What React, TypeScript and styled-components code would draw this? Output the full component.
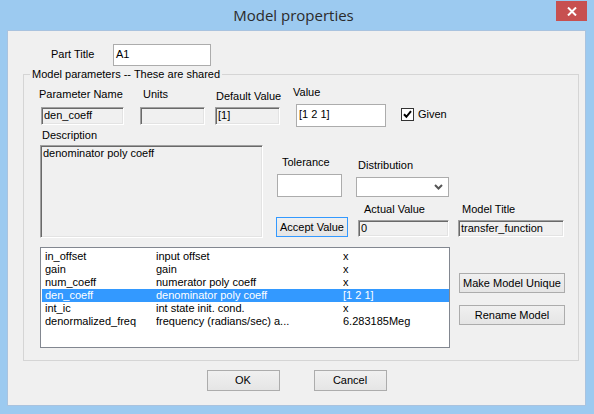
import React from 'react';
import styled, { createGlobalStyle } from 'styled-components';

const GlobalStyle = createGlobalStyle`
  html, body {
    margin: 0;
    padding: 0;
    background: #9ccaf0;
  }
  * {
    box-sizing: border-box;
  }
`;

const Window = styled.div`
  width: 594px;
  height: 414px;
  background: #9ccaf0;
  display: flex;
  flex-direction: column;
  font-family: 'Liberation Sans', Arial, sans-serif;
  font-size: 11px;
  color: #000;
  overflow: hidden;
`;

const TitleBar = styled.div`
  height: 30px;
  display: grid;
  grid-template-columns: 1fr auto 1fr;
  padding-right: 7px;
`;

const Title = styled.div`
  grid-column: 2;
  font-family: 'Open Sans', 'Noto Sans', sans-serif;
  font-size: 15px;
  line-height: 30px;
  color: #2b2b2b;
  padding-top: 0;
`;

const CloseButton = styled.div`
  grid-column: 3;
  justify-self: end;
  margin-top: 1px;
  width: 31px;
  height: 20px;
  background: #c75050;
  display: flex;
  align-items: center;
  justify-content: center;
`;

const Client = styled.div`
  flex: 1;
  margin: 0 8px 8px 7px;
  background: #f0f0f0;
  border: 1px solid #a9c3df;
  display: flex;
  flex-direction: column;
`;

const PartRow = styled.div`
  display: flex;
  align-items: center;
  margin-top: 13px;
  padding-left: 43px;
`;

const PartLabel = styled.span`
  width: 62px;
  line-height: 13px;
  margin-top: -2px;
`;

const TextInput = styled.div<{ $w: number; $h: number }>`
  width: ${(p) => p.$w}px;
  height: ${(p) => p.$h}px;
  background: #fff;
  border: 1px solid #acacac;
  padding: 2px 2px 0;
  line-height: 15px;
  white-space: nowrap;
`;

const SunkenBox = styled.div<{ $w: number; $h: number }>`
  width: ${(p) => p.$w}px;
  height: ${(p) => p.$h}px;
  background: #f0f0f0;
  border-style: solid;
  border-width: 1px;
  border-color: #a0a0a0 #ffffff #ffffff #a0a0a0;
  box-shadow: inset 1px 1px 0 #696969, inset -1px -1px 0 #e3e3e3;
  padding: 1px 2px 0 2px;
  line-height: 13px;
  white-space: nowrap;
  overflow: hidden;
`;

const GroupBox = styled.fieldset`
  margin: 2px 0 0 15px;
  width: 556px;
  min-width: 0;
  padding: 0 0 12px 0;
  border: 1px solid #d5d5d5;
  display: flex;
  flex-direction: column;
`;

const Legend = styled.legend`
  margin-left: 6px;
  padding: 0 2px;
  height: 13px;
  line-height: 13px;
  font-size: 11px;
`;

const Row = styled.div<{ $pl: number; $mt?: number }>`
  display: flex;
  align-items: flex-start;
  padding-left: ${(p) => p.$pl}px;
  margin-top: ${(p) => p.$mt ?? 0}px;
`;

const Column = styled.div<{ $ml?: number; $mt?: number }>`
  display: flex;
  flex-direction: column;
  align-items: flex-start;
  margin-left: ${(p) => p.$ml ?? 0}px;
  margin-top: ${(p) => p.$mt ?? 0}px;
`;

const Field = styled.div<{ $w: number; $ml?: number; $mt?: number }>`
  width: ${(p) => p.$w}px;
  display: flex;
  flex-direction: column;
  margin-left: ${(p) => p.$ml ?? 0}px;
  margin-top: ${(p) => p.$mt ?? 0}px;
`;

const FieldLabel = styled.span<{ $dx?: number; $gap: number }>`
  display: block;
  height: 13px;
  line-height: 13px;
  margin-left: ${(p) => p.$dx ?? 0}px;
  margin-bottom: ${(p) => p.$gap}px;
  white-space: nowrap;
`;

const CheckWrap = styled.label<{ $ml: number; $mt: number }>`
  display: flex;
  align-items: center;
  gap: 4px;
  margin-left: ${(p) => p.$ml}px;
  margin-top: ${(p) => p.$mt}px;
  line-height: 13px;
`;

const CheckBox = styled.span`
  width: 13px;
  height: 13px;
  background: #fff;
  border: 1px solid #333;
  display: flex;
  align-items: center;
  justify-content: center;
`;

const Select = styled.div<{ $w: number; $h: number }>`
  width: ${(p) => p.$w}px;
  height: ${(p) => p.$h}px;
  background: #fff;
  border: 1px solid #acacac;
  display: flex;
  align-items: center;
  justify-content: flex-end;
  padding-right: 5px;
`;

const Button = styled.div<{ $w: number; $h: number; $mt?: number; $focused?: boolean }>`
  width: ${(p) => p.$w}px;
  height: ${(p) => p.$h}px;
  margin-top: ${(p) => p.$mt ?? 0}px;
  border: 1px solid ${(p) => (p.$focused ? '#3399ff' : '#acacac')};
  background: linear-gradient(#f0f0f0, #e5e5e5);
  display: flex;
  align-items: center;
  justify-content: center;
  line-height: 13px;
  white-space: nowrap;
`;

const ListBox = styled.div`
  width: 410px;
  height: 101px;
  background: #fff;
  border: 1px solid #828790;
  padding: 2px 0 0 1px;
`;

const ListRow = styled.div<{ $selected?: boolean }>`
  display: flex;
  height: 13px;
  line-height: 13px;
  padding-left: 3px;
  background: ${(p) => (p.$selected ? '#3399ff' : 'transparent')};
  color: ${(p) => (p.$selected ? '#fff' : '#000')};
  white-space: nowrap;
`;

const Cell = styled.span<{ $w?: number }>`
  width: ${(p) => (p.$w ? `${p.$w}px` : 'auto')};
  flex: ${(p) => (p.$w ? 'none' : '1')};
  overflow: hidden;
`;

const Footer = styled.div`
  display: flex;
  justify-content: center;
  gap: 34px;
  margin-top: 9px;
`;

const params = [
  { name: 'in_offset', desc: 'input offset', value: 'x' },
  { name: 'gain', desc: 'gain', value: 'x' },
  { name: 'num_coeff', desc: 'numerator poly coeff', value: 'x' },
  { name: 'den_coeff', desc: 'denominator poly coeff', value: '[1 2 1]', selected: true },
  { name: 'int_ic', desc: 'int state init. cond.', value: 'x' },
  { name: 'denormalized_freq', desc: 'frequency (radians/sec) a...', value: '6.283185Meg' },
];

const App: React.FC = () => {
  return (
    <>
      <GlobalStyle />
      <Window>
        <TitleBar>
          <Title>Model properties</Title>
          <CloseButton>
            <svg width="10" height="9" viewBox="0 0 10 9">
              <path d="M1 0.5 L9 8.5 M9 0.5 L1 8.5" stroke="#fff" strokeWidth="2" />
            </svg>
          </CloseButton>
        </TitleBar>
        <Client>
          <PartRow>
            <PartLabel>Part Title</PartLabel>
            <TextInput $w={98} $h={22}>A1</TextInput>
          </PartRow>

          <GroupBox>
            <Legend>Model parameters -- These are shared</Legend>

            <Row $pl={17}>
              <Field $w={83} $mt={7}>
                <FieldLabel $dx={-2} $gap={6}>Parameter Name</FieldLabel>
                <SunkenBox $w={83} $h={18}>den_coeff</SunkenBox>
              </Field>
              <Field $w={65} $ml={16} $mt={7}>
                <FieldLabel $dx={3} $gap={6}>Units</FieldLabel>
                <SunkenBox $w={65} $h={18} />
              </Field>
              <Field $w={65} $ml={10} $mt={9}>
                <FieldLabel $dx={1} $gap={4}>Default Value</FieldLabel>
                <SunkenBox $w={65} $h={18}>[1]</SunkenBox>
              </Field>
              <Field $w={90} $ml={16} $mt={5}>
                <FieldLabel $dx={-3} $gap={5}>Value</FieldLabel>
                <TextInput $w={90} $h={23}>[1 2 1]</TextInput>
              </Field>
              <CheckWrap $ml={15} $mt={27}>
                <CheckBox>
                  <svg width="9" height="9" viewBox="0 0 9 9">
                    <path d="M1 4.2 L3.4 6.8 L8 1.2" stroke="#000" strokeWidth="2" fill="none" />
                  </svg>
                </CheckBox>
                Given
              </CheckWrap>
            </Row>

            <Row $pl={16}>
              <Field $w={223} $mt={2}>
                <FieldLabel $dx={2} $gap={3}>Description</FieldLabel>
                <SunkenBox $w={223} $h={93}>denominator poly coeff</SunkenBox>
              </Field>
              <Column $ml={13} $mt={29}>
                <Row $pl={0}>
                  <Field $w={65} $ml={1}>
                    <FieldLabel $dx={5} $gap={5}>Tolerance</FieldLabel>
                    <TextInput $w={65} $h={23} />
                  </Field>
                  <Field $w={93} $ml={14} $mt={3}>
                    <FieldLabel $dx={2} $gap={5}>Distribution</FieldLabel>
                    <Select $w={93} $h={20}>
                      <svg width="9" height="6" viewBox="0 0 9 6">
                        <path d="M1 1 L4.5 4.5 L8 1" stroke="#555" strokeWidth="2" fill="none" />
                      </svg>
                    </Select>
                  </Field>
                </Row>
                <Row $pl={0} $mt={6}>
                  <Button $w={72} $h={20} $mt={14} $focused>
                    Accept Value
                  </Button>
                  <Field $w={91} $ml={10}>
                    <FieldLabel $dx={6} $gap={4}>Actual Value</FieldLabel>
                    <SunkenBox $w={91} $h={17}>0</SunkenBox>
                  </Field>
                  <Field $w={106} $ml={9}>
                    <FieldLabel $dx={4} $gap={4}>Model Title</FieldLabel>
                    <SunkenBox $w={106} $h={17}>transfer_function</SunkenBox>
                  </Field>
                </Row>
              </Column>
            </Row>

            <Row $pl={16} $mt={9}>
              <ListBox>
                {params.map((p) => (
                  <ListRow key={p.name} $selected={p.selected}>
                    <Cell $w={111}>{p.name}</Cell>
                    <Cell $w={187}>{p.desc}</Cell>
                    <Cell>{p.value}</Cell>
                  </ListRow>
                ))}
              </ListBox>
              <Column $ml={9} $mt={26}>
                <Button $w={106} $h={20}>Make Model Unique</Button>
                <Button $w={106} $h={20} $mt={12}>Rename Model</Button>
              </Column>
            </Row>
          </GroupBox>

          <Footer>
            <Button $w={73} $h={21}>OK</Button>
            <Button $w={73} $h={21}>Cancel</Button>
          </Footer>
        </Client>
      </Window>
    </>
  );
};

export default App;
